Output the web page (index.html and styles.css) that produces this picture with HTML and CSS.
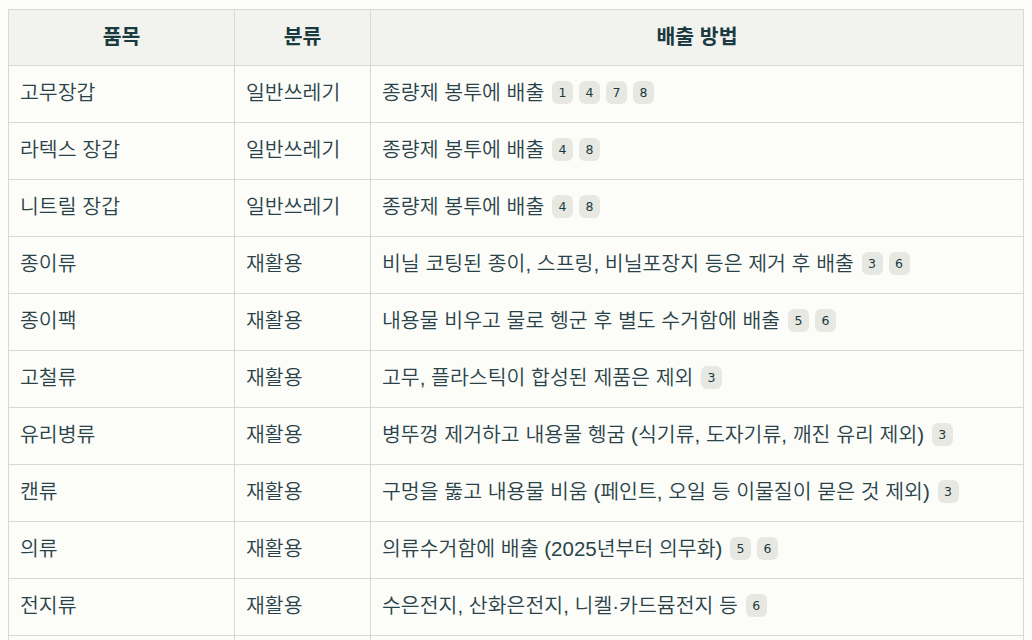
FILE: index.html
```html
<!DOCTYPE html>
<html lang="ko">
<head>
    <meta charset="UTF-8">
    <title>분리배출 안내</title>
    <link rel="stylesheet" href="styles.css">
</head>
<body>
    <table class="guide-table">
        <thead>
            <tr>
                <th class="col-item">품목</th>
                <th class="col-type">분류</th>
                <th>배출 방법</th>
            </tr>
        </thead>
        <tbody>
            <tr>
                <td>고무장갑</td>
                <td>일반쓰레기</td>
                <td>종량제 봉투에 배출 <span class="ref">1</span><span class="ref">4</span><span class="ref">7</span><span class="ref">8</span></td>
            </tr>
            <tr>
                <td>라텍스 장갑</td>
                <td>일반쓰레기</td>
                <td>종량제 봉투에 배출 <span class="ref">4</span><span class="ref">8</span></td>
            </tr>
            <tr>
                <td>니트릴 장갑</td>
                <td>일반쓰레기</td>
                <td>종량제 봉투에 배출 <span class="ref">4</span><span class="ref">8</span></td>
            </tr>
            <tr>
                <td>종이류</td>
                <td>재활용</td>
                <td>비닐 코팅된 종이, 스프링, 비닐포장지 등은 제거 후 배출 <span class="ref">3</span><span class="ref">6</span></td>
            </tr>
            <tr>
                <td>종이팩</td>
                <td>재활용</td>
                <td>내용물 비우고 물로 헹군 후 별도 수거함에 배출 <span class="ref">5</span><span class="ref">6</span></td>
            </tr>
            <tr>
                <td>고철류</td>
                <td>재활용</td>
                <td>고무, 플라스틱이 합성된 제품은 제외 <span class="ref">3</span></td>
            </tr>
            <tr>
                <td>유리병류</td>
                <td>재활용</td>
                <td>병뚜껑 제거하고 내용물 헹굼 (식기류, 도자기류, 깨진 유리 제외) <span class="ref">3</span></td>
            </tr>
            <tr>
                <td>캔류</td>
                <td>재활용</td>
                <td>구멍을 뚫고 내용물 비움 (페인트, 오일 등 이물질이 묻은 것 제외) <span class="ref">3</span></td>
            </tr>
            <tr>
                <td>의류</td>
                <td>재활용</td>
                <td>의류수거함에 배출 (2025년부터 의무화) <span class="ref">5</span><span class="ref">6</span></td>
            </tr>
            <tr>
                <td>전지류</td>
                <td>재활용</td>
                <td>수은전지, 산화은전지, 니켈·카드뮴전지 등 <span class="ref">6</span></td>
            </tr>
            <tr>
                <td>형광등</td>
                <td>재활용</td>
                <td>깨지지 않게 전용 수거함에 배출 <span class="ref">6</span></td>
            </tr>
        </tbody>
    </table>
</body>
</html>
```

FILE: styles.css
```css
:root {
    --bg-page: #fcfcf9;
    --bg-head: #f2f2ee;
    --border: #d9d9d4;
    --text-main: #2a4349;
    --text-head: #1b3a40;
    --ref-bg: #e8e8e3;
}

body {
    margin: 8px;
    background-color: var(--bg-page);
    color: var(--text-main);
    font-family: "Liberation Sans", "Noto Sans CJK KR", sans-serif;
    font-size: 20.5px;
}

.guide-table {
    width: 100%;
    border-collapse: collapse;
    border: 1px solid var(--border);
    margin-top: 1px;
}

.guide-table th,
.guide-table td {
    border: 1px solid var(--border);
    padding: 0 11px 6px;
    height: 50px;
    text-align: left;
    vertical-align: middle;
    font-weight: 350;
}

.guide-table th {
    background-color: var(--bg-head);
    color: var(--text-head);
    font-weight: 700;
    text-align: center;
    height: 49px;
}

.col-item {
    width: 203px;
}

.col-type {
    width: 113px;
}

.ref {
    display: inline-block;
    min-width: 21px;
    height: 23px;
    line-height: 23px;
    margin-left: 6px;
    padding: 0 4px;
    box-sizing: border-box;
    border-radius: 6px;
    background-color: var(--ref-bg);
    color: var(--text-head);
    font-family: "DejaVu Sans", sans-serif;
    font-size: 12.5px;
    font-weight: 400;
    text-align: center;
    vertical-align: 3px;
}

.ref:first-child {
    margin-left: 2px;
}
```
